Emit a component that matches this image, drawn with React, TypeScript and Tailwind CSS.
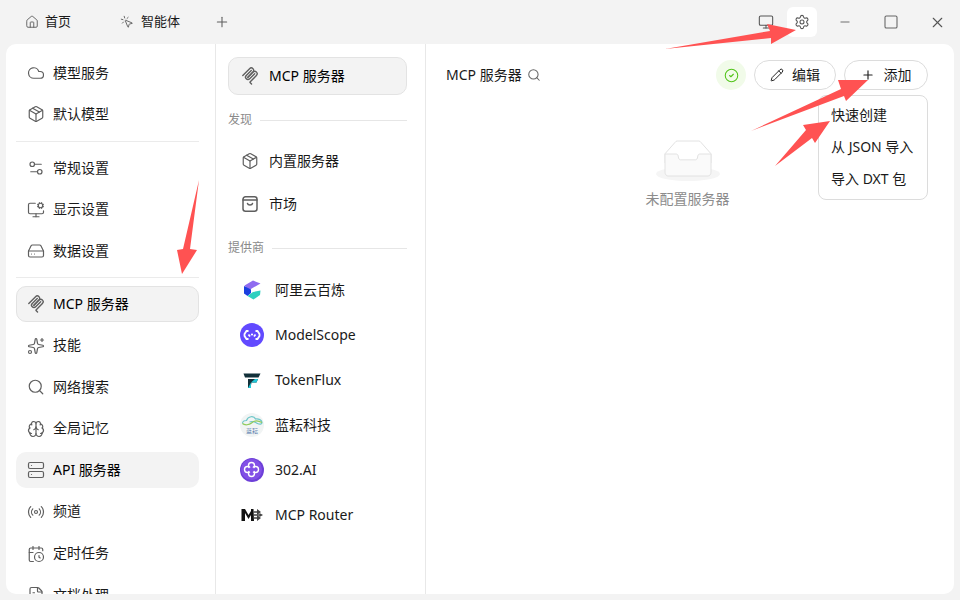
import type { ReactNode } from "react";
import {
  Brain,
  CalendarClock,
  CircleCheck,
  Cloud,
  FileText,
  HardDrive,
  House,
  Minus,
  Monitor,
  MonitorCog,
  MousePointerClick,
  Package,
  Pencil,
  Plus,
  Radio,
  Search,
  Server,
  Settings,
  Settings2,
  Sparkles,
  Square,
  X,
} from "lucide-react";

const ICON = "h-[18px] w-[18px] shrink-0 text-[#5f5f5f]";

function McpIcon({ className = ICON }: { className?: string }) {
  return (
    <svg viewBox="0 0 180 180" fill="none" stroke="currentColor" strokeWidth="14" strokeLinecap="round" className={className}>
      <path d="M18 84.85L85.88 16.97C95.25 7.6 110.45 7.6 119.82 16.97C129.2 26.34 129.2 41.54 119.82 50.91L68.56 102.18" />
      <path d="M69.27 101.47L119.82 50.91C129.2 41.54 144.39 41.54 153.77 50.91L154.12 51.27C163.49 60.64 163.49 75.83 154.12 85.21L92.72 146.6C89.6 149.72 89.6 154.79 92.72 157.91L105.33 170.52" />
      <path d="M102.85 33.94L52.65 84.15C43.28 93.52 43.28 108.71 52.65 118.09C62.02 127.46 77.22 127.46 86.59 118.09L136.79 67.88" />
    </svg>
  );
}

function BagIcon() {
  return (
    <svg viewBox="0 0 18 18" fill="none" stroke="currentColor" strokeWidth="1.5" strokeLinecap="round" className={ICON}>
      <rect x="2" y="1.750" width="14" height="14.500" rx="2.500" />
      <path d="M2 5h14" />
      <path d="M6.500 8.500c.5 2 4.500 2 5 0" />
    </svg>
  );
}

function SideItem({ icon, label, state }: { icon: ReactNode; label: string; state?: "active" | "hover" }) {
  const tone =
    state === "active"
      ? "border-[#e3e3e3] bg-[#f3f3f3]"
      : state === "hover"
        ? "border-transparent bg-[#f3f3f3]"
        : "border-transparent";
  return (
    <div className={`flex h-9 shrink-0 items-center gap-2 rounded-[10px] border px-[10px] text-[14px] ${state ? "text-black" : "text-[#1a1a1a]"} ${tone}`}>
      {icon}
      <span className="pb-[2px]">{label}</span>
    </div>
  );
}

function Sidebar() {
  return (
    <aside className="flex w-[210px] shrink-0 flex-col overflow-hidden border-r border-[#e8e8e8] pl-[10px] pr-[16px] pt-[11px]">
      <div className="flex flex-col gap-[5px]">
        <SideItem icon={<Cloud className={ICON} strokeWidth={1.6} />} label="模型服务" />
        <SideItem icon={<Package className={ICON} strokeWidth={1.6} />} label="默认模型" />
      </div>
      <div className="mb-[8px] mt-[9px] h-px shrink-0 bg-[#ebebeb]" />
      <div className="flex flex-col gap-[5.5px]">
        <SideItem icon={<Settings2 className={ICON} strokeWidth={1.6} />} label="常规设置" />
        <SideItem icon={<MonitorCog className={ICON} strokeWidth={1.6} />} label="显示设置" />
        <SideItem icon={<HardDrive className={ICON} strokeWidth={1.6} />} label="数据设置" />
      </div>
      <div className="my-[8px] h-px shrink-0 bg-[#ebebeb]" />
      <div className="flex flex-col gap-[5.6px]">
        <SideItem icon={<McpIcon />} label="MCP 服务器" state="active" />
        <SideItem icon={<Sparkles className={ICON} strokeWidth={1.6} />} label="技能" />
        <SideItem icon={<Search className={ICON} strokeWidth={1.6} />} label="网络搜索" />
        <SideItem icon={<Brain className={ICON} strokeWidth={1.6} />} label="全局记忆" />
        <SideItem icon={<Server className={ICON} strokeWidth={1.6} />} label="API 服务器" state="hover" />
        <SideItem icon={<Radio className={ICON} strokeWidth={1.6} />} label="频道" />
        <SideItem icon={<CalendarClock className={ICON} strokeWidth={1.6} />} label="定时任务" />
        <SideItem icon={<FileText className={ICON} strokeWidth={1.6} />} label="文档处理" />
      </div>
    </aside>
  );
}

function AliLogo() {
  return (
    <svg viewBox="0 0 24 24" className="h-6 w-6 shrink-0">
      <circle cx="12" cy="12" r="12" fill="#fff" />
      <path d="M4.500 7.500L13 2.500l7.500 3-8 4.500-4 2.500z" fill="#8f6bf0" />
      <path d="M4 8l7 3.500v3.500L7.500 18 4 15.500z" fill="#1a3fe0" />
      <path d="M7.500 18l5.500-4 7.500-1.500-.5 4.500-6.500 4.500z" fill="#2fd0c0" />
      <path d="M11 11.500l9.500-3v3l-7.500 2z" fill="#fff" />
    </svg>
  );
}

function ModelScopeLogo() {
  return (
    <svg viewBox="0 0 24 24" className="h-6 w-6 shrink-0">
      <circle cx="12" cy="12" r="12" fill="#624aff" />
      <g fill="none" stroke="#fff" strokeWidth="1.800">
        <path d="M8.500 8H6.500L4.500 11v2l2 3h2" />
        <path d="M15.500 8h2l2 3v2l-2 3h-2" />
        <path d="M8.500 11.500l1.500 2M15.500 11.500l-1.500 2" />
      </g>
      <circle cx="12" cy="11.500" r="1.100" fill="#fff" />
    </svg>
  );
}

function TokenFluxLogo() {
  return (
    <svg viewBox="0 0 24 24" className="h-6 w-6 shrink-0">
      <circle cx="12" cy="12" r="12" fill="#fff" />
      <path d="M3.500 5.500h17L18.500 9.500H5z" fill="#12303a" />
      <path d="M8 11h10l-1.500 3.500H11.500L10.500 20H8z" fill="#12303a" />
      <path d="M11 14.500h5.500L18 11h-3z" fill="#22c8d8" />
      <path d="M8 20l3-5.500V20z" fill="#22c8d8" />
    </svg>
  );
}

function LanyunLogo() {
  return (
    <svg viewBox="0 0 24 24" className="h-6 w-6 shrink-0">
      <circle cx="12" cy="12" r="12" fill="#f1f4f4" />
      <path d="M2.500 10.500c0-2.500 2.500-3 4-3C8 3 14 2.500 15.500 6c3-.5 6.500 1 6.500 3.500 0 2-2.500 2-4.500 1-3-1.500-4.500-3-8-1.500" fill="none" stroke="#6cc6c8" strokeWidth="1.200" />
      <path d="M2.500 10.500c2 2 7 1.500 9-.5 2-2 6-3 10.500-.5" fill="none" stroke="#8fca5a" strokeWidth="1.200" />
      <text x="12" y="20" textAnchor="middle" fontSize="6" fill="#5c7fae" fontFamily='"Noto Sans CJK SC", sans-serif'>蓝耘</text>
    </svg>
  );
}

function Logo302() {
  return (
    <svg viewBox="0 0 24 24" className="h-6 w-6 shrink-0">
      <circle cx="12" cy="12" r="12" fill="#6d3fd8" />
      <circle cx="11.500" cy="11.500" r="10.500" fill="#8250e6" />
      <g fill="none" stroke="#fff" strokeWidth="1.400">
        <circle cx="11.500" cy="7.500" r="3" />
        <circle cx="11.500" cy="15.500" r="3" />
        <circle cx="7.500" cy="11.500" r="3" />
        <circle cx="15.500" cy="11.500" r="3" />
      </g>
      <circle cx="11.500" cy="11.500" r="2.600" fill="#8250e6" />
    </svg>
  );
}

function RouterLogo() {
  return (
    <svg viewBox="0 0 24 24" className="h-6 w-6 shrink-0">
      <path d="M1.500 18V6h3.500l3.500 6 2.500-4v4l-2.500 4-3.500-6v8z" fill="#111" />
      <path d="M11 6h2.500l.5 12h-3z" fill="#111" />
      <path d="M13.500 9h5M13.500 12h7M13.500 15h5" stroke="#444" strokeWidth="1.700" />
      <path d="M17 6l4 3-4 3zM19.500 10l3.500 2-3.500 2zM17 12l4 3-4 3z" fill="#444" />
    </svg>
  );
}

function SectionLabel({ label, className }: { label: string; className: string }) {
  return (
    <div className={`flex h-5 items-center gap-2 text-[12px] text-[#8a8a8a] ${className}`}>
      <span>{label}</span>
      <div className="h-px flex-1 bg-[#e6e6e6]" />
    </div>
  );
}

function ProviderRow({ logo, name }: { logo: ReactNode; name: string }) {
  return (
    <div className="flex h-[45px] items-center gap-[11px] pl-[12px] text-[14px] text-[#1a1a1a]">
      {logo}
      <span>{name}</span>
    </div>
  );
}

function MiddleColumn() {
  return (
    <section className="flex w-[210px] shrink-0 flex-col border-r border-[#e8e8e8] pl-[12px] pr-[18px] pt-[13px]">
      <div className="flex h-[38px] shrink-0 items-center gap-[10px] rounded-[10px] border border-[#e3e3e3] bg-[#f3f3f3] px-[12px] text-[14px] text-black">
        <McpIcon />
        <span className="pb-[2px]">MCP 服务器</span>
      </div>
      <SectionLabel label="发现" className="mt-[15px]" />
      <div className="mt-[13px] flex h-9 items-center gap-[10px] pl-[13px] text-[14px] text-[#1a1a1a]">
        <Package className={ICON} strokeWidth={1.6} />
        <span className="pb-[2px]">内置服务器</span>
      </div>
      <div className="mt-[7px] flex h-9 items-center gap-[10px] pl-[13px] text-[14px] text-[#1a1a1a]">
        <BagIcon />
        <span className="pb-[2px]">市场</span>
      </div>
      <SectionLabel label="提供商" className="mt-[16px]" />
      <div className="mt-[9px] flex flex-col">
        <ProviderRow logo={<AliLogo />} name="阿里云百炼" />
        <ProviderRow logo={<ModelScopeLogo />} name="ModelScope" />
        <ProviderRow logo={<TokenFluxLogo />} name="TokenFlux" />
        <ProviderRow logo={<LanyunLogo />} name="蓝耘科技" />
        <ProviderRow logo={<Logo302 />} name="302.AI" />
        <ProviderRow logo={<RouterLogo />} name="MCP Router" />
      </div>
    </section>
  );
}

function EmptyBox() {
  return (
    <svg width="64" height="41" viewBox="0 0 64 41">
      <g transform="translate(0 1)" fill="none" fillRule="evenodd">
        <ellipse fill="#f5f5f5" cx="32" cy="33" rx="32" ry="7" />
        <g fillRule="nonzero" stroke="#e2e2e2">
          <path d="M55 12.76L44.854 1.258C44.367.474 43.656 0 42.907 0H21.093c-.749 0-1.46.474-1.947 1.257L9 12.761V22h46v-9.24z" />
          <path
            d="M41.613 15.931c0-1.605.994-2.93 2.227-2.931H55v18.137C55 33.26 53.68 35 52.05 35h-40.1C10.32 35 9 33.259 9 31.137V13h11.16c1.233 0 2.227 1.323 2.227 2.928v.022c0 1.605 1.005 2.901 2.237 2.901h14.752c1.232 0 2.237-1.308 2.237-2.913v-.007z"
            fill="#fafafa"
          />
        </g>
      </g>
    </svg>
  );
}

function ServersPane() {
  return (
    <section className="flex min-w-0 flex-1 flex-col pl-[20px] pr-[26px] pt-[16px]">
      <header className="flex h-[30px] items-center text-[14px] text-[#1a1a1a]">
        <span className="pb-[2px]">MCP 服务器</span>
        <Search className="ml-[5px] h-[14px] w-[14px] text-[#666]" strokeWidth={1.8} />
        <div className="ml-auto flex h-[30px] w-[30px] items-center justify-center rounded-full bg-[#f1fbe9]">
          <CircleCheck className="h-[15px] w-[15px] text-[#52c41a]" strokeWidth={1.7} />
        </div>
        <button className="ml-2 flex h-[30px] w-[82px] items-center justify-center gap-2 rounded-full border border-[#dcdcdc] bg-white">
          <Pencil className="h-[14px] w-[14px] text-[#222]" strokeWidth={1.7} />
          <span className="pb-[2px]">编辑</span>
        </button>
        <button className="ml-2 flex h-[30px] w-[84px] items-center justify-center gap-[9px] rounded-full border border-[#dcdcdc] bg-white">
          <Plus className="h-[14px] w-[14px] text-[#222]" strokeWidth={2} />
          <span className="pb-[2px]">添加</span>
        </button>
      </header>
      <div className="mt-[50px] flex flex-col items-center pl-[1px]">
        <EmptyBox />
        <span className="mt-[8px] text-[14px] leading-5 text-[#8c8c8c]">未配置服务器</span>
      </div>
    </section>
  );
}

function TitleBar() {
  return (
    <div className="flex h-[44px] shrink-0 items-center text-[13px] text-[#1a1a1a]">
      <House className="ml-[25px] h-[14px] w-[14px] text-[#5f5f5f]" strokeWidth={1.6} />
      <span className="ml-[6px]">首页</span>
      <MousePointerClick className="ml-[49px] h-[14px] w-[14px] text-[#5f5f5f]" strokeWidth={1.6} />
      <span className="ml-[7px]">智能体</span>
      <Plus className="ml-[34px] h-[16px] w-[16px] text-[#5f5f5f]" strokeWidth={1.6} />
      <div className="ml-auto flex items-center">
        <div className="flex h-[30px] w-[30px] items-center justify-center">
          <Monitor className="h-4 w-4 text-[#555]" strokeWidth={1.6} />
        </div>
        <div className="ml-[6px] flex h-[30px] w-[30px] items-center justify-center rounded-[6px] bg-white">
          <Settings className="h-4 w-4 text-[#555]" strokeWidth={1.6} />
        </div>
        <div className="ml-[5px] flex h-[30px] w-[46px] items-center justify-center">
          <Minus className="h-[14px] w-[14px] text-[#666]" strokeWidth={1.6} />
        </div>
        <div className="flex h-[30px] w-[46px] items-center justify-center">
          <Square className="h-4 w-4 text-[#666]" strokeWidth={1.6} />
        </div>
        <div className="flex h-[30px] w-[46px] items-center justify-center">
          <X className="h-[17px] w-[17px] text-[#555]" strokeWidth={1.6} />
        </div>
      </div>
    </div>
  );
}

function AddMenu() {
  return (
    <div className="absolute right-[26px] top-[51px] flex h-[105px] w-[110px] flex-col justify-center rounded-[8px] border border-[#dcdcdc] bg-white pb-[2px] pl-[12px] text-[14px] leading-[32px] text-[#1a1a1a]">
      <div>快速创建</div>
      <div>从 JSON 导入</div>
      <div>导入 DXT 包</div>
    </div>
  );
}

function Arrows() {
  return (
    <svg className="pointer-events-none absolute left-0 top-0 h-[600px] w-[960px]" viewBox="0 0 960 600">
      <g fill="#ff5252">
        <polygon points="665,49 770,31 767,24 796,30 771,44 771,38" />
        <polygon points="751,131 841,89 838,80 868,80 846,101 844,96" />
        <polygon points="775,166 806,130 803,125 830,121 815,143 812,138" />
        <polygon points="199,180 183,249 177,250 182,274 197,250 190,249" />
      </g>
    </svg>
  );
}

export default function App() {
  return (
    <div
      className="relative flex h-[600px] w-[960px] flex-col overflow-hidden bg-[#f3f3f3]"
      style={{ fontFamily: '"Noto Sans", "Noto Sans CJK SC", sans-serif' }}
    >
      <TitleBar />
      <main className="relative mx-[6px] mb-[6px] flex min-h-0 flex-1 overflow-hidden rounded-[10px] bg-white">
        <Sidebar />
        <MiddleColumn />
        <ServersPane />
        <AddMenu />
      </main>
      <Arrows />
    </div>
  );
}
